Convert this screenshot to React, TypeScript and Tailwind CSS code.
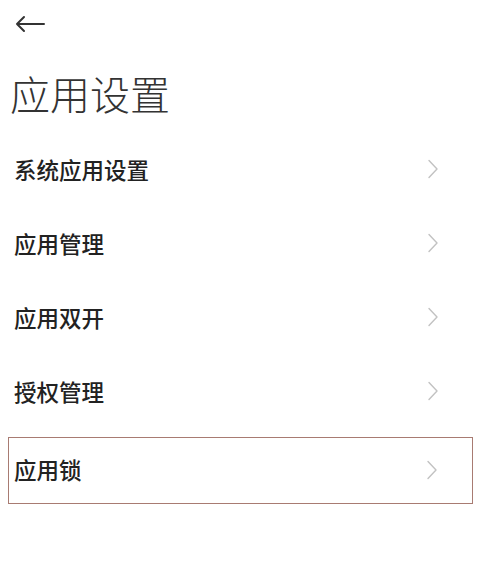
import React from 'react';

const items = ['系统应用设置', '应用管理', '应用双开', '授权管理'];

function Chevron() {
  return (
    <svg width="12" height="20" viewBox="0 0 12 20" fill="none" className="shrink-0">
      <path d="M2 1.5 L10 10 L2 18.5" stroke="#c2c2c2" strokeWidth="1.4" strokeLinecap="round" strokeLinejoin="round" />
    </svg>
  );
}

export default function App() {
  return (
    <div
      className="w-[481px] h-[572px] bg-white text-[#222]"
      style={{ fontFamily: '"Noto Sans CJK SC", "Noto Sans", sans-serif' }}
    >
      {/* Header */}
      <div className="pt-[15px] pl-[15px] h-[73px]">
        <svg width="30" height="18" viewBox="0 0 30 18" fill="none">
          <path d="M29 9 H2 M9 2 L2 9 L9 16" stroke="#333" strokeWidth="2" strokeLinecap="round" strokeLinejoin="round" />
        </svg>
      </div>
      <h1 className="pl-[10px] text-[40px] leading-none font-light text-[#333] h-[59px]">应用设置</h1>

      {/* Settings list */}
      <div className="flex flex-col">
        {items.map((label) => (
          <div key={label} className="h-[74px] flex items-center justify-between pl-[14px] pr-[42px]">
            <span className="text-[22.5px] font-medium leading-none">{label}</span>
            <Chevron />
          </div>
        ))}
        <div className="mt-[9px] mx-[8px] h-[67px] border-[1.5px] border-[#a87b72] flex items-center justify-between pl-[5px] pr-[34px] pb-[2px]">
          <span className="text-[22.5px] font-medium leading-none">应用锁</span>
          <Chevron />
        </div>
      </div>
    </div>
  );
}
